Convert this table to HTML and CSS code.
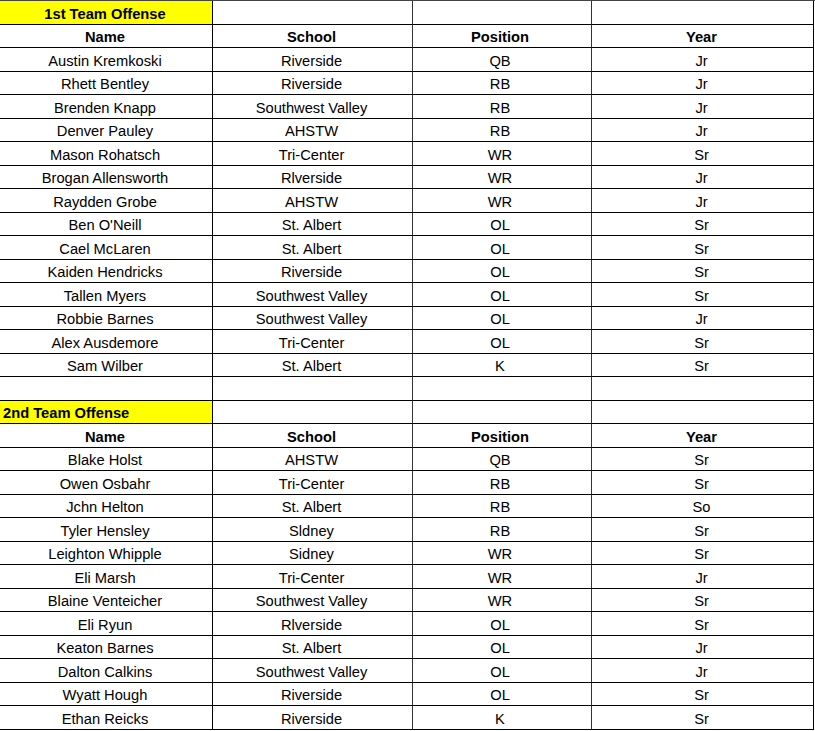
FILE: index.html
```html
<!DOCTYPE html>
<html>
<head>
<meta charset="utf-8">
<link rel="stylesheet" href="styles.css">
</head>
<body>
<div class="sheet">
  <div class="row"><div class="cell title">1st Team Offense</div><div class="cell"></div><div class="cell"></div><div class="cell"></div></div>
  <div class="row head"><div class="cell">Name</div><div class="cell">School</div><div class="cell">Position</div><div class="cell">Year</div></div>
  <div class="row"><div class="cell">Austin Kremkoski</div><div class="cell">Riverside</div><div class="cell">QB</div><div class="cell">Jr</div></div>
  <div class="row"><div class="cell">Rhett Bentley</div><div class="cell">Riverside</div><div class="cell">RB</div><div class="cell">Jr</div></div>
  <div class="row"><div class="cell">Brenden Knapp</div><div class="cell">Southwest Valley</div><div class="cell">RB</div><div class="cell">Jr</div></div>
  <div class="row"><div class="cell">Denver Pauley</div><div class="cell">AHSTW</div><div class="cell">RB</div><div class="cell">Jr</div></div>
  <div class="row"><div class="cell">Mason Rohatsch</div><div class="cell">Tri-Center</div><div class="cell">WR</div><div class="cell">Sr</div></div>
  <div class="row"><div class="cell">Brogan Allensworth</div><div class="cell">Rlverside</div><div class="cell">WR</div><div class="cell">Jr</div></div>
  <div class="row"><div class="cell">Raydden Grobe</div><div class="cell">AHSTW</div><div class="cell">WR</div><div class="cell">Jr</div></div>
  <div class="row"><div class="cell">Ben O'Neill</div><div class="cell">St. Albert</div><div class="cell">OL</div><div class="cell">Sr</div></div>
  <div class="row"><div class="cell">Cael McLaren</div><div class="cell">St. Albert</div><div class="cell">OL</div><div class="cell">Sr</div></div>
  <div class="row"><div class="cell">Kaiden Hendricks</div><div class="cell">Riverside</div><div class="cell">OL</div><div class="cell">Sr</div></div>
  <div class="row"><div class="cell">Tallen Myers</div><div class="cell">Southwest Valley</div><div class="cell">OL</div><div class="cell">Sr</div></div>
  <div class="row"><div class="cell">Robbie Barnes</div><div class="cell">Southwest Valley</div><div class="cell">OL</div><div class="cell">Jr</div></div>
  <div class="row"><div class="cell">Alex Ausdemore</div><div class="cell">Tri-Center</div><div class="cell">OL</div><div class="cell">Sr</div></div>
  <div class="row"><div class="cell">Sam Wilber</div><div class="cell">St. Albert</div><div class="cell">K</div><div class="cell">Sr</div></div>
  <div class="row"><div class="cell"></div><div class="cell"></div><div class="cell"></div><div class="cell"></div></div>
  <div class="row"><div class="cell title left">2nd Team Offense</div><div class="cell"></div><div class="cell"></div><div class="cell"></div></div>
  <div class="row head"><div class="cell">Name</div><div class="cell">School</div><div class="cell">Position</div><div class="cell">Year</div></div>
  <div class="row"><div class="cell">Blake Holst</div><div class="cell">AHSTW</div><div class="cell">QB</div><div class="cell">Sr</div></div>
  <div class="row"><div class="cell">Owen Osbahr</div><div class="cell">Tri-Center</div><div class="cell">RB</div><div class="cell">Sr</div></div>
  <div class="row"><div class="cell">Jchn Helton</div><div class="cell">St. Albert</div><div class="cell">RB</div><div class="cell">So</div></div>
  <div class="row"><div class="cell">Tyler Hensley</div><div class="cell">Sldney</div><div class="cell">RB</div><div class="cell">Sr</div></div>
  <div class="row"><div class="cell">Leighton Whipple</div><div class="cell">Sidney</div><div class="cell">WR</div><div class="cell">Sr</div></div>
  <div class="row"><div class="cell">Eli Marsh</div><div class="cell">Tri-Center</div><div class="cell">WR</div><div class="cell">Jr</div></div>
  <div class="row"><div class="cell">Blaine Venteicher</div><div class="cell">Southwest Valley</div><div class="cell">WR</div><div class="cell">Sr</div></div>
  <div class="row"><div class="cell">Eli Ryun</div><div class="cell">Rlverside</div><div class="cell">OL</div><div class="cell">Sr</div></div>
  <div class="row"><div class="cell">Keaton Barnes</div><div class="cell">St. Albert</div><div class="cell">OL</div><div class="cell">Jr</div></div>
  <div class="row"><div class="cell">Dalton Calkins</div><div class="cell">Southwest Valley</div><div class="cell">OL</div><div class="cell">Jr</div></div>
  <div class="row"><div class="cell">Wyatt Hough</div><div class="cell">Riverside</div><div class="cell">OL</div><div class="cell">Sr</div></div>
  <div class="row"><div class="cell">Ethan Reicks</div><div class="cell">Riverside</div><div class="cell">K</div><div class="cell">Sr</div></div>
</div>
</body>
</html>
```
FILE: styles.css
```css
html, body {
  margin: 0;
  padding: 0;
  background: #ffffff;
}
body {
  font-family: "Liberation Sans", Arial, sans-serif;
  font-size: 14.7px;
  color: #000;
  overflow: hidden;
}
.sheet {
  width: 815px;
  border-top: 1px solid #444;
}
.row {
  display: grid;
  grid-template-columns: 213px 200px 179px 222px;
  height: 23.5px;
}
.cell {
  box-sizing: border-box;
  border-bottom: 1px solid #000;
  border-right: 1px solid #000;
  display: flex;
  align-items: center;
  justify-content: center;
  white-space: nowrap;
  padding-top: 2.5px;
  padding-right: 2px;
}
.cell:nth-child(2),
.cell:nth-child(3) {
  border-right-color: #333;
}
.cell:nth-child(3) {
  padding-right: 4px;
}
.head .cell {
  font-weight: bold;
}
.title {
  background: #ffff00;
  font-weight: bold;
}
.left {
  justify-content: flex-start;
  padding-left: 3px;
}
```
